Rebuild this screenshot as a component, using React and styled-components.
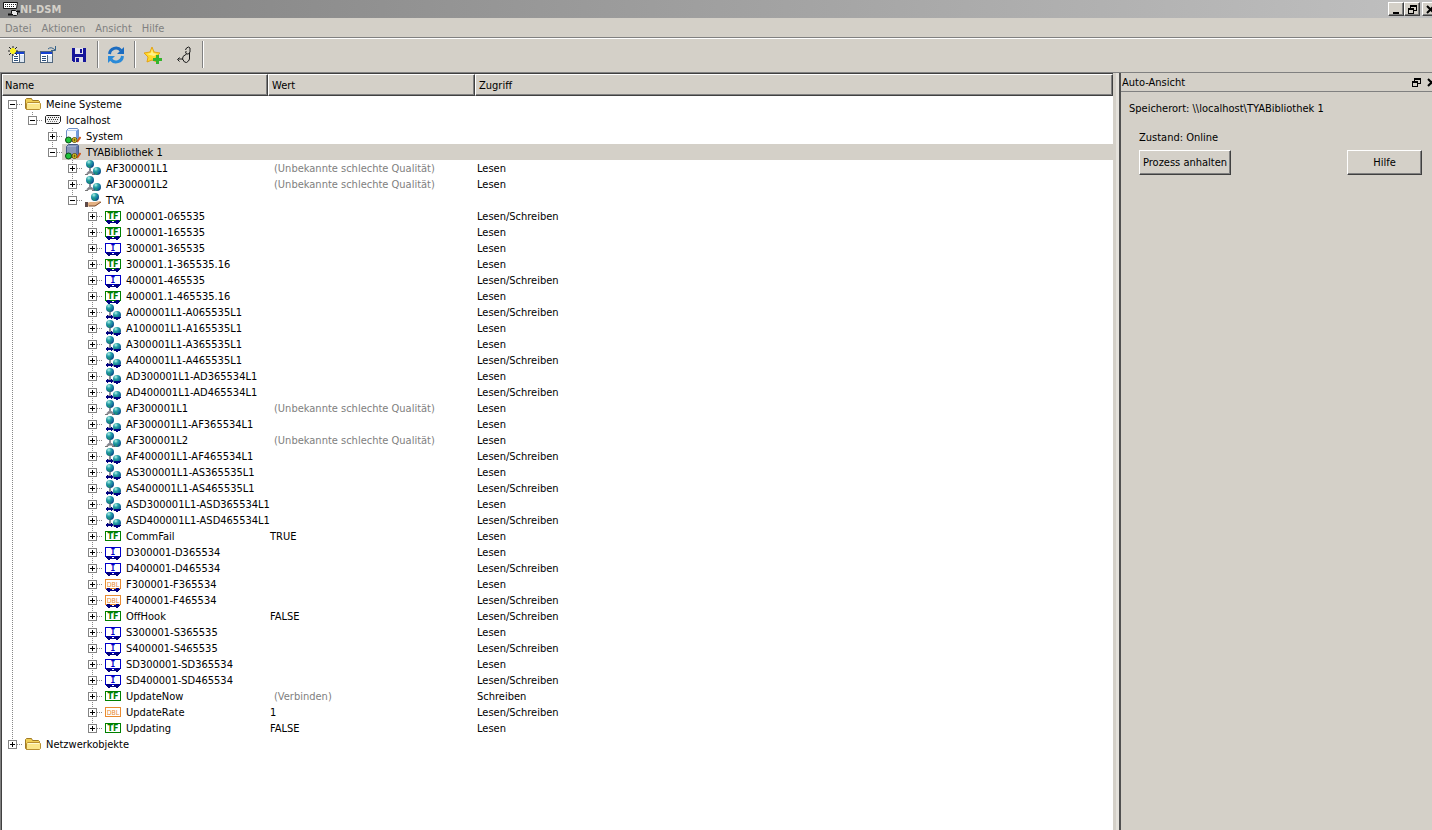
import React, { useState } from "react";
import styled, { createGlobalStyle, css } from "styled-components";

const tree = [
  {
    name: "Meine Systeme", icon: "folder", children: [
      {
        name: "localhost", icon: "host", children: [
          { name: "System", icon: "process" },
          {
            name: "TYABibliothek 1", icon: "process", selected: true, children: [
              { name: "AF300001L1", icon: "globe", bad: true, access: "Lesen" },
              { name: "AF300001L2", icon: "globe", bad: true, access: "Lesen" },
              {
                name: "TYA", icon: "server", children: [
                  { name: "000001-065535", icon: "tfIo", access: "Lesen/Schreiben" },
                  { name: "100001-165535", icon: "tfIo", access: "Lesen" },
                  { name: "300001-365535", icon: "intIo", access: "Lesen" },
                  { name: "300001.1-365535.16", icon: "tfIo", access: "Lesen" },
                  { name: "400001-465535", icon: "intIo", access: "Lesen/Schreiben" },
                  { name: "400001.1-465535.16", icon: "tfIo", access: "Lesen" },
                  { name: "A000001L1-A065535L1", icon: "globeIo", access: "Lesen/Schreiben" },
                  { name: "A100001L1-A165535L1", icon: "globeIo", access: "Lesen" },
                  { name: "A300001L1-A365535L1", icon: "globeIo", access: "Lesen" },
                  { name: "A400001L1-A465535L1", icon: "globeIo", access: "Lesen/Schreiben" },
                  { name: "AD300001L1-AD365534L1", icon: "globeIo", access: "Lesen" },
                  { name: "AD400001L1-AD465534L1", icon: "globeIo", access: "Lesen/Schreiben" },
                  { name: "AF300001L1", icon: "globe", bad: true, access: "Lesen" },
                  { name: "AF300001L1-AF365534L1", icon: "globeIo", access: "Lesen" },
                  { name: "AF300001L2", icon: "globe", bad: true, access: "Lesen" },
                  { name: "AF400001L1-AF465534L1", icon: "globeIo", access: "Lesen/Schreiben" },
                  { name: "AS300001L1-AS365535L1", icon: "globeIo", access: "Lesen" },
                  { name: "AS400001L1-AS465535L1", icon: "globeIo", access: "Lesen/Schreiben" },
                  { name: "ASD300001L1-ASD365534L1", icon: "globeIo", access: "Lesen" },
                  { name: "ASD400001L1-ASD465534L1", icon: "globeIo", access: "Lesen/Schreiben" },
                  { name: "CommFail", icon: "tf", value: "TRUE", access: "Lesen" },
                  { name: "D300001-D365534", icon: "intIo", access: "Lesen" },
                  { name: "D400001-D465534", icon: "intIo", access: "Lesen/Schreiben" },
                  { name: "F300001-F365534", icon: "dblIo", access: "Lesen" },
                  { name: "F400001-F465534", icon: "dblIo", access: "Lesen/Schreiben" },
                  { name: "OffHook", icon: "tf", value: "FALSE", access: "Lesen/Schreiben" },
                  { name: "S300001-S365535", icon: "intIo", access: "Lesen" },
                  { name: "S400001-S465535", icon: "intIo", access: "Lesen/Schreiben" },
                  { name: "SD300001-SD365534", icon: "intIo", access: "Lesen" },
                  { name: "SD400001-SD465534", icon: "intIo", access: "Lesen/Schreiben" },
                  { name: "UpdateNow", icon: "tf", note: "(Verbinden)", access: "Schreiben" },
                  { name: "UpdateRate", icon: "dbl", value: "1", access: "Lesen/Schreiben" },
                  { name: "Updating", icon: "tf", value: "FALSE", access: "Lesen" },
                ],
              },
            ],
          },
        ],
      },
    ],
  },
  { name: "Netzwerkobjekte", icon: "folder" },
];

// lines: for every ancestor level, whether its vertical line runs through this row
const flatten = (nodes, closed, lines = [], path = "") =>
  nodes.flatMap((node, index) => {
    const key = `${path}/${node.name}`;
    const hasNext = index < nodes.length - 1;
    const open = !!node.children && !closed.includes(key);
    const row = { node, key, lines, hasNext, open, first: !path && index === 0 };
    return open
      ? [row, ...flatten(node.children, closed, [...lines, hasNext], key)]
      : [row];
  });

/* ---------- icons ---------- */

const TypeIcon = ({ text, color, io, font, size = 8, weight = "bold" }) => (
  <svg width="16" height="16" viewBox="0 0 16 16">
    <g shapeRendering="crispEdges">
      <rect x="0.5" y="3.5" width="15" height="9" fill="#fff" stroke={color} />
      {io && (
        <path d="M1 13h1v-1h3v1h2v1h2v-1h2v-1h3v1h1v1h-1v1h-1v1h-2v-1H5v1H3v-1H2v-1H1z" fill="#000080" />
      )}
    </g>
    <text x="8" y="11" textAnchor="middle" fontFamily={font} fontWeight={weight} fontSize={size} fill={color}>{text}</text>
  </svg>
);

const Globe = ({ cx, cy, r }) => (
  <>
    <circle cx={cx} cy={cy} r={r} fill="url(#globe)" />
    <path d={`M${cx - r + 1} ${cy + 1}q${r / 2} ${r} ${r} ${r - 2}q-1 -2 -${r} -${r - 2}z`} fill="#1f9f6a" opacity="0.8" />
  </>
);

const GlobeDefs = () => (
  <svg width="0" height="0" viewBox="0 0 1 1">
    <defs>
      <radialGradient id="globe" cx="0.35" cy="0.25" r="0.8">
        <stop offset="0" stopColor="#b4efe9" />
        <stop offset="0.35" stopColor="#2aa5a8" />
        <stop offset="0.7" stopColor="#10709c" />
        <stop offset="1" stopColor="#0a3d78" />
      </radialGradient>
    </defs>
  </svg>
);

const GlobeIcon = ({ io }) => (
  <svg width="16" height="16" viewBox="0 0 16 16">
    <path d="M5 8v4M5 11l-3 3M5 11l4 3" stroke="#8d8d98" strokeWidth="2" fill="none" />
    {!io && <path d="M0 14.5h3M7 14.5h3M3 13h4" stroke="#777" />}
    <Globe cx={5} cy={4} r={4} />
    <Globe cx={12} cy={11} r={4} />
    {io && <path d="M0 13l3-3v2h3v-2l2 3-2 3v-2H3v2zM9 13h7v1h-1v1h-2v1h-2v-1H9z" fill="#000080" shapeRendering="crispEdges" />}
  </svg>
);

const ServerIcon = () => (
  <svg width="16" height="16" viewBox="0 0 16 16">
    <path d="M2 11l3-1h5l5-1 1 1-5 4H5l-3 1z" fill="#e3b184" />
    <path d="M0 10h3v5H0z" fill="#5d4a48" />
    <path d="M4 14h6l6-4" stroke="#7a4a2c" fill="none" />
    <Globe cx={10} cy={5} r={4} />
  </svg>
);

const FolderIcon = () => (
  <svg width="16" height="16" viewBox="0 0 16 16">
    <path d="M0.5 12.5v-9l1-1h5l1 2h6l1 1v7l-1 1h-12z" fill="#f0cf55" stroke="#a07a25" />
    <path d="M1.5 13.5v-6l1-1h12l1 1v5l-1 1z" fill="#fbe68a" stroke="#b98f30" />
    <path d="M3 7.5h11" stroke="#fff9cf" />
  </svg>
);

const HostIcon = () => (
  <svg width="16" height="16" viewBox="0 0 16 16">
    <path d="M1.5 3.5h13l1 1v5l-2 2h-12l-1-1v-6z" fill="#f4f4f4" stroke="#222" />
    <path d="M3 5.5h11M2 7.5h11" stroke="#333" strokeDasharray="1 1" />
    <path d="M3 9.5h9" stroke="#777" strokeDasharray="1 1" />
  </svg>
);

const ProcessIcon = ({ dark }) => (
  <svg width="16" height="16" viewBox="0 0 16 16">
    <path d="M1.5 2.5l2-2h9l1 1v10l-2 2h-10z" fill={dark ? "#8896b8" : "#f6f9ff"} stroke={dark ? "#465a86" : "#6f8fc4"} />
    <path d="M11 3l2-2v10l-2 2z" fill={dark ? "#5d75ae" : "#6f9ae0"} />
    <path d="M2 2.5h9" stroke={dark ? "#9cabd0" : "#b3ccf2"} />
    <circle cx="3.5" cy="12" r="3" fill="#1fc43a" stroke="#0a4d14" />
    <path d="M12 14l3.5-5" stroke="#d2581e" strokeWidth="2" />
    <circle cx="9.5" cy="12" r="2.5" fill="#fff02a" stroke="#5d4a10" />
    <path d="M8 12h3M9.5 10.5v3" stroke="#6d5a10" />
  </svg>
);

const tfFont = "'DejaVu Sans', sans-serif";
const intFont = "'DejaVu Sans Mono', monospace";
const dblFont = "'DejaVu Sans Condensed', 'DejaVu Sans', sans-serif";

const icons = {
  folder: () => <FolderIcon />,
  host: () => <HostIcon />,
  process: (selected) => <ProcessIcon dark={selected} />,
  globe: () => <GlobeIcon />,
  globeIo: () => <GlobeIcon io />,
  server: () => <ServerIcon />,
  tf: () => <TypeIcon text="TF" color="#008000" font={tfFont} />,
  tfIo: () => <TypeIcon text="TF" color="#008000" font={tfFont} io />,
  intIo: () => <TypeIcon text="I" color="#0000c8" font={intFont} io />,
  dbl: () => <TypeIcon text="DBL" color="#e88a30" font={dblFont} size={7} weight="normal" />,
  dblIo: () => <TypeIcon text="DBL" color="#e88a30" font={dblFont} size={7} weight="normal" io />,
};

const AppIcon = () => (
  <svg width="18" height="16" viewBox="0 0 18 16">
    <path d="M1.5 1.5h14l-1 6h-13z" fill="#fff" stroke="#111" />
    <path d="M3 3.5h11M3 5.5h10" stroke="#222" strokeDasharray="1 1" />
    <path d="M6 13.5h5M15 10.5h3" stroke="#111" strokeWidth="2" />
    <path d="M9.5 9.5h4l2 2v2l-1 1h-3l-2-2z" fill="#e8e8e8" stroke="#111" />
  </svg>
);

const NewViewIcon = () => (
  <svg width="18" height="18" viewBox="0 0 18 18" shapeRendering="crispEdges">
    <rect x="4.5" y="5.5" width="12" height="11" fill="#fff" stroke="#52677d" />
    <path d="M5 6h11v2H5z" fill="#1540d0" />
    <path d="M6 10h4M6 12h4M6 14h4" stroke="#2c4f7c" />
    <path d="M11 8v8" stroke="#52677d" />
    <path d="M12 9h4v7h-4z" fill="#dfe8f2" />
    <path d="M0 5h10M5 0v10M1 1l8 8M9 1L1 9" stroke="#222" shapeRendering="auto" />
    <path d="M2 5h6M5 2v6M3 3l4 4M7 3L3 7" stroke="#f9f020" strokeWidth="2" shapeRendering="auto" />
  </svg>
);

const OpenViewIcon = () => (
  <svg width="18" height="18" viewBox="0 0 18 18" shapeRendering="crispEdges">
    <rect x="1.5" y="5.5" width="12" height="11" fill="#fff" stroke="#52677d" />
    <path d="M2 6h11v2H2z" fill="#1540d0" />
    <path d="M3 10h4M3 12h4M3 14h4" stroke="#2c4f7c" />
    <path d="M8 9v7" stroke="#52677d" />
    <path d="M9 10h4v6H9z" fill="#dfe8f2" />
    <path d="M9 3q3-3 7 1M16.5 0v4.5h-4.5" stroke="#35628a" fill="none" shapeRendering="auto" />
  </svg>
);

const SaveIcon = () => (
  <svg width="16" height="16" viewBox="0 0 16 16" shapeRendering="crispEdges">
    <path d="M1 1h14v14H2l-1-1z" fill="#15159a" />
    <path d="M4 1h8v6H4z" fill="#e6e6ee" />
    <path d="M9 2h2v4H9z" fill="#15159a" />
    <path d="M4 10h8v5H4z" fill="#dcdce6" />
    <path d="M5 11h3v4H5z" fill="#15159a" />
  </svg>
);

const RefreshIcon = () => (
  <svg width="18" height="18" viewBox="0 0 18 18" fill="none">
    <path d="M2.5 8a6.5 6.5 0 0 1 11.5-3.5" stroke="#1c6cc0" strokeWidth="3" />
    <path d="M17 1v7h-7z" fill="#1c6cc0" />
    <path d="M15.5 10a6.5 6.5 0 0 1-11.5 3.500" stroke="#2a8ad8" strokeWidth="3" />
    <path d="M1 17v-7h7z" fill="#2a8ad8" />
  </svg>
);

const FavoriteIcon = () => (
  <svg width="18" height="18" viewBox="0 0 18 18">
    <path d="M8 1l2 5 6 1-4 4 1 5-5-2-5 2 1-5-4-4 6-1z" fill="#ffd82a" stroke="#e5a414" />
    <path d="M8 3l1 4 4 1-3 2-4-1-3-1 4-1z" fill="#fff08a" />
    <path d="M12 9h3v3h3v3h-3v3h-3v-3H9v-3h3z" fill="#35b52c" />
  </svg>
);

const ProbeIcon = () => (
  <svg width="16" height="18" viewBox="0 0 16 18" fill="none" stroke="#1a1a1a">
    <path d="M9.5 4l1-2 2-1 1.500 1v4l-1.500 2h-2l-1-2 1-1" />
    <path d="M10.500 8L7 10.500l-.5 3M13.500 7v6l-1 2-2 1.500-2-.5-2-3H2M3.500 11.500L1.500 13.500l2 2" />
  </svg>
);

const MinimizeGlyph = () => (
  <svg width="9" height="9" viewBox="0 0 9 9" shapeRendering="crispEdges">
    <path d="M1 7h6v2H1z" />
  </svg>
);

const RestoreGlyph = () => (
  <svg width="9" height="9" viewBox="0 0 9 9" shapeRendering="crispEdges">
    <path d="M2 0h7v6H6V5h2V2H3v1H2zM0 3h6v6H0zM1 5v3h4V5z" fillRule="evenodd" />
  </svg>
);

const CloseGlyph = () => (
  <svg width="9" height="9" viewBox="0 0 9 9">
    <path d="M1 1l7 7M8 1L1 8" stroke="#000" strokeWidth="2" />
  </svg>
);

const Lines = ({ up, down, box, plus }) => (
  <svg width="20" height="16" viewBox="0 0 20 16" shapeRendering="crispEdges">
    {up && <path d="M10.5 0v8" stroke="#888" strokeDasharray="1 1" />}
    {down && <path d="M10.5 8v8" stroke="#888" strokeDasharray="1 1" />}
    {box && (
      <>
        <path d="M11 8.5h9" stroke="#888" strokeDasharray="1 1" />
        <rect x="6.5" y="4.5" width="8" height="8" fill="#fff" stroke="#848484" />
        <path d="M8 8.5h5" stroke="#000" />
        {plus && <path d="M10.5 6v5" stroke="#000" />}
      </>
    )}
  </svg>
);

/* ---------- page ---------- */

const menus = ["Datei", "Aktionen", "Ansicht", "Hilfe"];

const tools = [
  { label: "Neue Ansicht", icon: <NewViewIcon /> },
  { label: "Ansicht öffnen", icon: <OpenViewIcon /> },
  { label: "Speichern", icon: <SaveIcon />, end: true },
  { label: "Aktualisieren", icon: <RefreshIcon />, end: true },
  { label: "Favorit hinzufügen", icon: <FavoriteIcon /> },
  { label: "Überwachen", icon: <ProbeIcon />, end: true },
];

const App = () => {
  const [closed, setClosed] = useState([]);

  const toggle = (key) =>
    setClosed(closed.includes(key) ? closed.filter((k) => k !== key) : [...closed, key]);

  return (
    <>
      <GlobalStyle />
      <Window>
        <TitleBar>
          <AppIcon />
          <Title>NI-DSM</Title>
          <WinButton aria-label="Minimieren"><MinimizeGlyph /></WinButton>
          <WinButton aria-label="Wiederherstellen"><RestoreGlyph /></WinButton>
          <WinButton aria-label="Schließen" $last><CloseGlyph /></WinButton>
        </TitleBar>

        <MenuBar>
          {menus.map((menu) => <MenuItem key={menu}>{menu}</MenuItem>)}
        </MenuBar>

        <Toolbar>
          {tools.map(({ label, icon, end }) => (
            <React.Fragment key={label}>
              <ToolButton aria-label={label}>{icon}</ToolButton>
              {end && <Separator />}
            </React.Fragment>
          ))}
        </Toolbar>

        <Main>
          <TreePane>
            <GlobeDefs />
            <TreeTable>
              <colgroup>
                <NameCol />
                <ValueCol />
                <col />
              </colgroup>
              <thead>
                <tr>
                  <HeadCell $first>Name</HeadCell>
                  <HeadCell>Wert</HeadCell>
                  <HeadCell>Zugriff</HeadCell>
                </tr>
              </thead>
              <tbody>
                {flatten(tree, closed).map(({ node, key, lines, hasNext, open, first }) => (
                  <tr key={key}>
                    <NameCell>
                      <NameWrap>
                        {lines.map((line, i) => <Lines key={i} up={line} down={line} />)}
                        <Expander
                          aria-label={`${node.name} ${open ? "zuklappen" : "aufklappen"}`}
                          onClick={() => toggle(key)}
                        >
                          <Lines up={!first} down={hasNext} box plus={!open} />
                        </Expander>
                        <Label $selected={node.selected}>
                          {icons[node.icon](node.selected)}
                          <Name>{node.name}</Name>
                        </Label>
                      </NameWrap>
                    </NameCell>
                    <Cell $selected={node.selected} $muted={node.bad || node.note}>
                      {node.bad ? "(Unbekannte schlechte Qualität)" : node.note || node.value}
                    </Cell>
                    <Cell $selected={node.selected}>{node.access}</Cell>
                  </tr>
                ))}
              </tbody>
            </TreeTable>
          </TreePane>

          <SidePane>
            <SideHead>
              <SideTitle>Auto-Ansicht</SideTitle>
              <DockButton aria-label="Andocken"><RestoreGlyph /></DockButton>
              <DockButton aria-label="Ansicht schließen"><CloseGlyph /></DockButton>
            </SideHead>
            <SideBody>
              <div>Speicherort: \\localhost\TYABibliothek 1</div>
              <ProcessBox>
                <div>Zustand: Online</div>
                <ButtonRow>
                  <PushButton>Prozess anhalten</PushButton>
                  <PushButton $wide>Hilfe</PushButton>
                </ButtonRow>
              </ProcessBox>
            </SideBody>
          </SidePane>
        </Main>
      </Window>
    </>
  );
};

export default App;

const GlobalStyle = createGlobalStyle`
  body {
    margin: 0;
    background: #d4d0c8;
    color: #000;
    font: 11px/16px Tahoma, "DejaVu Sans Condensed", "DejaVu Sans", sans-serif;
  }
  button {
    font: inherit;
    color: inherit;
    padding: 0;
    border: 0;
    background: none;
  }
  svg {
    display: block;
    flex: none;
  }
`;

const raised = css`
  background: #d4d0c8;
  border: 1px solid;
  border-color: #fff #404040 #404040 #fff;
  box-shadow: inset -1px -1px 0 #808080;
`;

const Window = styled.div`
  display: flex;
  flex-direction: column;
  min-height: 100vh;
  overflow: hidden;
`;
const TitleBar = styled.header`
  display: flex;
  align-items: center;
  height: 18px;
  padding-left: 2px;
  margin-right: -6px;
  background: linear-gradient(to right, #808080, #c0c0c0);
`;
const Title = styled.h1`
  flex: 1;
  margin: 0;
  padding-top: 1px;
  font-size: 11px;
  color: #d4d0c8;
`;
const WinButton = styled.button`
  ${raised}
  display: flex;
  align-items: center;
  justify-content: center;
  width: 16px;
  height: 14px;
  margin-left: ${({ $last }) => ($last ? "2px" : "0")};
`;
const MenuBar = styled.nav`
  display: flex;
  align-items: center;
  box-sizing: border-box;
  height: 20px;
  padding-top: 2px;
  border-bottom: 1px solid #808080;
`;
const MenuItem = styled.button`
  padding: 0 5px;
  color: #808080;
`;
const Toolbar = styled.div`
  display: flex;
  align-items: center;
  gap: 1px;
  box-sizing: border-box;
  height: 34px;
  padding: 0 0 2px 2px;
  border-top: 1px solid #fff;
`;
const ToolButton = styled.button`
  display: flex;
  align-items: center;
  justify-content: center;
  width: 30px;
  height: 28px;
`;
const Separator = styled.span`
  width: 1px;
  height: 27px;
  margin: 0 1px 0 2px;
  border-left: 1px solid #808080;
  background: #fff;
`;
const Main = styled.main`
  flex: 1;
  display: grid;
  grid-template-columns: minmax(0, 1fr) 313px;
  column-gap: 6px;
  border-top: 1px solid #808080;
`;
const TreePane = styled.section`
  background: #fff;
  border: 1px solid #404040;
  border-width: 1px 0 0 1px;
  box-shadow: -1px 0 0 #808080;
  margin-left: 1px;
`;
const TreeTable = styled.table`
  width: 100%;
  table-layout: fixed;
  border-collapse: separate;
  border-spacing: 0;
`;
const NameCol = styled.col`
  width: 266px;
`;
const ValueCol = styled.col`
  width: 207px;
`;
const HeadCell = styled.th`
  ${raised}
  box-sizing: border-box;
  height: 22px;
  padding: 2px 0 0 ${({ $first }) => ($first ? "2px" : "3px")};
  font-weight: normal;
  text-align: left;
`;
const NameCell = styled.td`
  padding: 0;
`;
const NameWrap = styled.div`
  display: flex;
  height: 16px;
  white-space: nowrap;
`;
const Expander = styled.button`
  flex: none;
`;
const Label = styled.div`
  flex: 1;
  display: flex;
  gap: 5px;
  padding-left: 3px;
  background: ${({ $selected }) => ($selected ? "#d4d0c8" : "none")};
`;
const Name = styled.span`
  padding-top: 2px;
  line-height: 14px;
`;
const Cell = styled.td`
  padding: 2px 0 0 ${({ $muted }) => ($muted ? "6px" : "2px")};
  line-height: 14px;
  color: ${({ $muted }) => ($muted ? "#808080" : "#000")};
  background: ${({ $selected }) => ($selected ? "#d4d0c8" : "none")};
  white-space: nowrap;
`;
const SidePane = styled.aside`
  border-left: 2px solid #505050;
  box-shadow: -3px 0 0 #e4e1db;
  overflow: hidden;
`;
const SideHead = styled.div`
  display: flex;
  align-items: center;
  height: 18px;
  padding-left: 1px;
  margin-right: -4px;
  border-bottom: 1px solid #808080;
`;
const SideTitle = styled.h2`
  flex: 1;
  margin: 0;
  padding-top: 2px;
  font-size: 11px;
  font-weight: normal;
`;
const DockButton = styled.button`
  margin-left: 6px;
`;
const SideBody = styled.div`
  padding: 9px 10px 8px 8px;
`;
const ProcessBox = styled.div`
  padding: 13px 0 0 10px;
`;
const ButtonRow = styled.div`
  display: flex;
  justify-content: space-between;
  padding-top: 4px;
`;
const PushButton = styled.button`
  ${raised}
  min-width: ${({ $wide }) => ($wide ? "75px" : "0")};
  height: 25px;
  padding: 0 3px;
`;
